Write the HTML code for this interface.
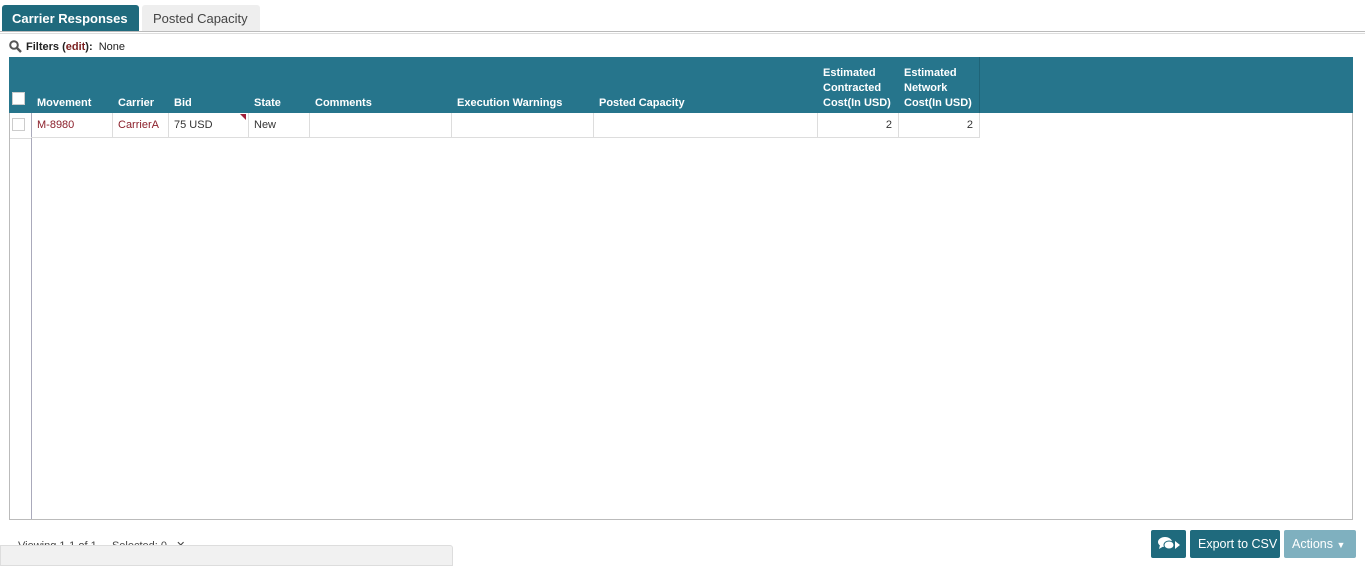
<!DOCTYPE html>
<html><head><style>
*{margin:0;padding:0;box-sizing:border-box}
body{width:1365px;height:566px;background:#fff;font-family:"Liberation Sans",sans-serif;font-size:11px;color:#333;position:relative;overflow:hidden}
.abs{position:absolute}
.tab1{left:2px;top:5px;width:137px;height:27px;background:#1f6a7d;color:#fff;font-weight:bold;font-size:13px;padding:6px 0 0 10px;border-radius:3px 3px 0 0}
.tab2{left:142px;top:5px;width:118px;height:26px;background:#eee;color:#444;font-size:13px;padding:6px 0 0 11px;border-radius:3px 3px 0 0}
.hd{position:absolute;top:57px;height:56px;background:#26758c;color:#fff;font-weight:bold;font-size:11px;border-right:1px solid #1f6478;padding:0 5px 2px 6px;display:flex;align-items:flex-end;line-height:15px}
.cell{position:absolute;top:113px;height:25px;border-right:1px solid #ddd;border-bottom:1px solid #ddd;padding:6px 6px;font-size:11px}
.btn{position:absolute;top:530px;height:28px;background:#1f6a7d;color:#fff;font-size:12.5px;border-radius:2px;padding:7px 8px;white-space:nowrap}
</style></head><body>
<div class="abs tab1">Carrier Responses</div>
<div class="abs tab2">Posted Capacity</div>
<div class="abs" style="left:0;top:31px;width:1365px;height:3px;border-top:1px solid #bbb;border-bottom:1px solid #ddd"></div>
<svg class="abs" style="left:9px;top:40px" width="13" height="13" viewBox="0 0 13 13"><circle cx="5" cy="5" r="3.8" fill="none" stroke="#555" stroke-width="2"/><path d="M8 8l4 4" stroke="#555" stroke-width="2.4"/></svg>
<div class="abs" style="left:26px;top:41px;font-size:11px;color:#222"><b>Filters (<span style="color:#7a1f1f">edit</span>):</b>&nbsp; None</div>
<div class="abs" style="left:9px;top:57px;width:1344px;height:463px;border:1px solid #bbb;border-top:none"></div>
<div class="abs" style="left:9px;top:57px;width:1344px;height:56px;background:#26758c"></div>
<div class="abs" style="left:31px;top:57px;width:1px;height:462px;background:#aab"></div>
<div class="abs" style="left:12px;top:92px;width:13px;height:13px;background:#fff;border:1px solid #ccc"></div>
<div class="hd" style="left:31px;width:82px">Movement</div>
<div class="hd" style="left:112px;width:57px">Carrier</div>
<div class="hd" style="left:168px;width:81px">Bid</div>
<div class="hd" style="left:248px;width:62px">State</div>
<div class="hd" style="left:309px;width:143px">Comments</div>
<div class="hd" style="left:451px;width:143px">Execution Warnings</div>
<div class="hd" style="left:593px;width:225px">Posted Capacity</div>
<div class="hd" style="left:817px;width:82px">Estimated Contracted Cost(In USD)</div>
<div class="hd" style="left:898px;width:82px">Estimated Network Cost(In USD)</div>
<div class="abs" style="left:12px;top:118px;width:13px;height:13px;border:1px solid #ccc"></div>
<div class="abs" style="left:10px;top:138px;width:21px;height:1px;background:#ddd"></div>
<div class="cell" style="left:31px;width:82px;color:#8b1f2a">M-8980</div>
<div class="cell" style="left:112px;width:57px;color:#8b1f2a">CarrierA</div>
<div class="cell" style="left:168px;width:81px">75 USD<span class="abs" style="right:2px;top:1px;width:0;height:0;border-left:6px solid transparent;border-top:6px solid #a0203a"></span></div>
<div class="cell" style="left:248px;width:62px">New</div>
<div class="cell" style="left:309px;width:143px"></div>
<div class="cell" style="left:451px;width:143px"></div>
<div class="cell" style="left:593px;width:225px"></div>
<div class="cell" style="left:817px;width:82px;text-align:right">2</div>
<div class="cell" style="left:898px;width:82px;text-align:right">2</div>
<div class="abs" style="left:18px;top:539px;font-size:11px;color:#444">Viewing 1-1 of 1&nbsp;&nbsp;&nbsp;&nbsp; Selected: 0&nbsp;&nbsp; ✕</div>
<div class="abs" style="left:0;top:545px;width:453px;height:21px;background:#f1f1f1;border:1px solid #ddd;border-radius:0 3px 0 0"></div>
<div class="btn" style="left:1151px;width:35px;padding:6px 6px">
<svg width="24" height="16" viewBox="0 0 24 16"><ellipse cx="8" cy="6" rx="7" ry="5" fill="#fff"/><path d="M3 9l-1 4 5-3z" fill="#fff"/><ellipse cx="12" cy="9" rx="5" ry="4" fill="#fff" stroke="#1f6a7d" stroke-width="1"/><path d="M18 5l5 4-5 4z" fill="#fff"/></svg></div>
<div class="btn" style="left:1190px;width:90px">Export to CSV</div>
<div class="btn" style="left:1284px;width:72px;background:#7fb0bf">Actions <span style="font-size:9px">▼</span></div>
</body></html>
